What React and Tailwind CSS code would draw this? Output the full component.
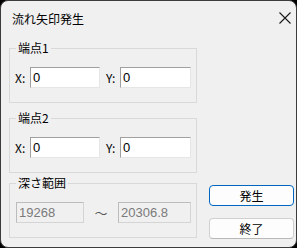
import React from "react";

const font = { fontFamily: '"Noto Sans CJK JP", "Noto Sans", sans-serif' };

function Field({ value, w, disabled }) {
  return (
    <div
      className={
        "h-[21px] flex items-center pl-[2px] text-[13px] leading-none " +
        w +
        (disabled
          ? " bg-[#f0f0f0] border border-[#d4d4d4] border-t-[#bcbcbc] border-l-[#bcbcbc] text-[#7a7a7a]"
          : " bg-white border border-t-[#a0a0a0] border-l-[#a0a0a0] border-r-[#e6e6e6] border-b-[#e6e6e6] text-black")
      }
      style={{ fontFamily: '"Liberation Sans", Arial, sans-serif' }}
    >
      {value}
    </div>
  );
}

function Group({ label, children, className = "" }) {
  return (
    <div className={"relative w-[188px] h-[55px] border border-[#d9d9d9] " + className}>
      <div className="absolute left-[6px] top-[-9px] h-[16px] px-[2px] bg-[#f0f0f0] text-[12px] leading-[16px] text-black">
        {label}
      </div>
      {children}
    </div>
  );
}

function XYRow() {
  return (
    <div className="flex items-center pt-[18px] pl-[5px] text-[12px] text-black">
      <span className="w-[15px]">X:</span>
      <Field value="0" w="w-[70px]" />
      <span className="w-[14px] ml-[6px]">Y:</span>
      <Field value="0" w="w-[71px]" />
    </div>
  );
}

export default function App() {
  return (
    <div className="w-[300px] h-[251px] bg-white" style={font}>
      <div className="w-[297px] h-[248px] bg-black">
        <div className="w-full h-full rounded-[8px] border border-[#3c3c3c] bg-[#f0f0f0] flex flex-col overflow-hidden">
          <div className="h-[36px] flex items-center justify-between pl-[11px] pr-[5px] shrink-0">
            <span className="text-[12px] text-black">流れ矢印発生</span>
            <svg width="12" height="12" viewBox="0 0 12 12" className="mb-[3px]">
              <path d="M0.5 0.5 L11.5 11.5 M11.5 0.5 L0.5 11.5" stroke="#1a1a1a" strokeWidth="1.1" fill="none" />
            </svg>
          </div>
          <div className="flex pl-[8px] pt-[11px]">
            <div className="flex flex-col">
              <Group label="端点1">
                <XYRow />
              </Group>
              <Group label="端点2" className="mt-[15px]">
                <XYRow />
              </Group>
              <Group label="深さ範囲" className="mt-[10px]">
                <div className="flex items-center pt-[18px] pl-[6px] text-[12px]">
                  <Field value="19268" w="w-[68px]" disabled />
                  <span className="w-[34px] text-center text-[#555] text-[13px]">～</span>
                  <Field value="20306.8" w="w-[73px]" disabled />
                </div>
              </Group>
            </div>
            <div className="flex flex-col ml-[12px] mt-[137px]">
              <button className="w-[85px] h-[21px] rounded-[4px] border border-[#0067c0] bg-[#fdfdfd] text-[12px] leading-none text-black flex items-center justify-center">
                発生
              </button>
              <button className="w-[85px] h-[21px] mt-[12px] rounded-[4px] border border-[#d0d0d0] border-b-[#b8b8b8] bg-[#fdfdfd] text-[12px] leading-none text-black flex items-center justify-center">
                終了
              </button>
            </div>
          </div>
        </div>
      </div>
    </div>
  );
}
